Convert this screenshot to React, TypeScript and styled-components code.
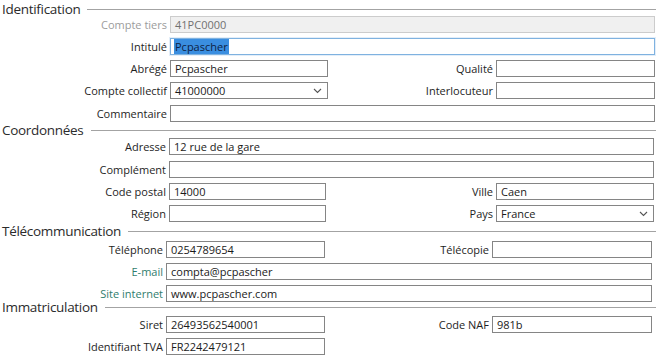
import React from 'react';
import styled, { createGlobalStyle } from 'styled-components';

const GlobalStyle = createGlobalStyle`
  html, body {
    margin: 0;
    padding: 0;
    background: #ffffff;
  }
  body {
    font-family: "Open Sans", "Noto Sans", "Liberation Sans", sans-serif;
    color: #1a1a1a;
  }
`;

const Page = styled.div`
  width: 660px;
  height: 363px;
  box-sizing: border-box;
  padding-top: 1.5px;
  overflow: hidden;
  background: #fff;
`;

const Section = styled.section<{ $top: number; $pad: number }>`
  margin-top: ${p => p.$top}px;
  padding-right: ${p => p.$pad}px;
`;

const Heading = styled.div<{ $pad: number }>`
  display: flex;
  align-items: center;
  height: 15px;
  padding-left: 2px;
  margin-right: ${p => 4 - p.$pad}px;

  &::after {
    content: '';
    flex: 1;
    height: 1px;
    margin-left: 7px;
    background: #a3a3a3;
  }
`;

const HeadingText = styled.span`
  font-size: 13.5px;
  line-height: 15px;
  color: #2b2b2b;
  letter-spacing: -0.3px;
`;

const Rows = styled.div<{ $top: number }>`
  display: flex;
  flex-direction: column;
  gap: 5.3px;
  margin-top: ${p => p.$top}px;
`;

const Row = styled.div<{ $cols: string }>`
  display: grid;
  grid-template-columns: ${p => p.$cols};
  column-gap: 3px;
  height: 17px;
  align-items: center;
`;

const Label = styled.span<{ $tone?: 'muted' | 'link' }>`
  font-size: 11px;
  line-height: 17px;
  text-align: right;
  white-space: nowrap;
  color: ${p => (p.$tone === 'muted' ? '#9c9c9c' : p.$tone === 'link' ? '#2f7d6d' : '#1e1e1e')};
`;

const Box = styled.div<{ $wide?: boolean; $state?: 'disabled' | 'focus' }>`
  grid-column: ${p => (p.$wide ? '2 / 5' : 'auto')};
  box-sizing: border-box;
  height: 17px;
  display: flex;
  align-items: center;
  padding: 0 4px;
  font-size: 11px;
  color: ${p => (p.$state === 'disabled' ? '#707070' : '#1a1a1a')};
  background: ${p => (p.$state === 'disabled' ? '#f0f0f0' : '#fff')};
  border: 1px solid
    ${p => (p.$state === 'disabled' ? '#cccccc' : p.$state === 'focus' ? '#7fb2e0' : '#858585')};
  box-shadow: ${p => (p.$state === 'focus' ? '0 0 0 1px #e3eef9' : 'none')};
  white-space: nowrap;
  overflow: hidden;
`;

const Selected = styled.span`
  background: #3a8ee0;
  color: #0e1f44;
  padding: 0 1px;
  margin-left: -1px;
`;

const Value = styled.span`
  flex: 1;
`;

const Chevron = styled.svg`
  width: 9px;
  height: 6px;
  margin-right: 1px;
  flex-shrink: 0;
`;

const Arrow = () => (
  <Chevron viewBox="0 0 9 6">
    <path d="M1 1 L4.5 4.5 L8 1" fill="none" stroke="#555" strokeWidth="1.1" />
  </Chevron>
);

const Empty = () => <span />;

const colsA = '167px 158px 1fr 159px';
const colsB = '166px 157px 1fr 158px';
const colsC = '163px 159px 1fr 160px';

export default function App() {
  return (
    <Page>
      <GlobalStyle />

      <Section $top={0} $pad={5}>
        <Heading $pad={5}>
          <HeadingText>Identification</HeadingText>
        </Heading>
        <Rows $top={-1}>
          <Row $cols={colsA}>
            <Label $tone="muted">Compte tiers</Label>
            <Box $wide $state="disabled">41PC0000</Box>
          </Row>
          <Row $cols={colsA}>
            <Label>Intitulé</Label>
            <Box $wide $state="focus">
              <Selected>Pcpascher</Selected>
            </Box>
          </Row>
          <Row $cols={colsA}>
            <Label>Abrégé</Label>
            <Box>Pcpascher</Box>
            <Label>Qualité</Label>
            <Box />
          </Row>
          <Row $cols={colsA}>
            <Label>Compte collectif</Label>
            <Box>
              <Value>41000000</Value>
              <Arrow />
            </Box>
            <Label>Interlocuteur</Label>
            <Box />
          </Row>
          <Row $cols={colsA}>
            <Label>Commentaire</Label>
            <Box $wide />
          </Row>
        </Rows>
      </Section>

      <Section $top={1.8} $pad={6}>
        <Heading $pad={6}>
          <HeadingText>Coordonnées</HeadingText>
        </Heading>
        <Rows $top={0}>
          <Row $cols={colsB}>
            <Label>Adresse</Label>
            <Box $wide>12 rue de la gare</Box>
          </Row>
          <Row $cols={colsB}>
            <Label>Complément</Label>
            <Box $wide />
          </Row>
          <Row $cols={colsB}>
            <Label>Code postal</Label>
            <Box>14000</Box>
            <Label>Ville</Label>
            <Box>Caen</Box>
          </Row>
          <Row $cols={colsB}>
            <Label>Région</Label>
            <Box />
            <Label>Pays</Label>
            <Box>
              <Value>France</Value>
              <Arrow />
            </Box>
          </Row>
        </Rows>
      </Section>

      <Section $top={1.5} $pad={8}>
        <Heading $pad={8}>
          <HeadingText>Télécommunication</HeadingText>
        </Heading>
        <Rows $top={2}>
          <Row $cols={colsC}>
            <Label>Téléphone</Label>
            <Box>0254789654</Box>
            <Label>Télécopie</Label>
            <Box />
          </Row>
          <Row $cols={colsC}>
            <Label $tone="link">E-mail</Label>
            <Box $wide>compta@pcpascher</Box>
          </Row>
          <Row $cols={colsC}>
            <Label $tone="link">Site internet</Label>
            <Box $wide>www.pcpascher.com</Box>
          </Row>
        </Rows>
      </Section>

      <Section $top={-2} $pad={8}>
        <Heading $pad={8}>
          <HeadingText>Immatriculation</HeadingText>
        </Heading>
        <Rows $top={0.5}>
          <Row $cols={colsC}>
            <Label>Siret</Label>
            <Box>26493562540001</Box>
            <Label>Code NAF</Label>
            <Box>981b</Box>
          </Row>
          <Row $cols={colsC}>
            <Label>Identifiant TVA</Label>
            <Box>FR2242479121</Box>
            <Empty />
            <Empty />
          </Row>
        </Rows>
      </Section>
    </Page>
  );
}
